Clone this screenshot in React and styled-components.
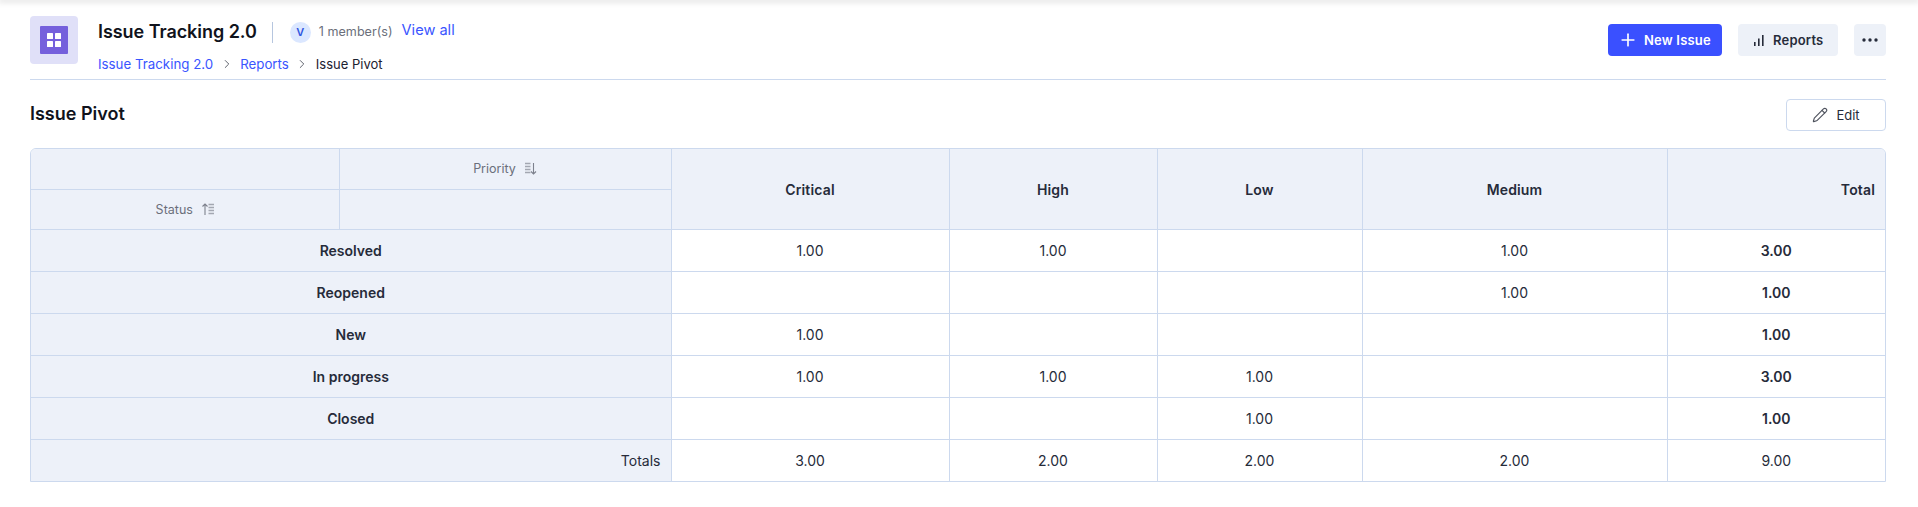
import React from 'react'
import styled, { createGlobalStyle } from 'styled-components'
import { Plus, Pencil, ChevronRight } from 'lucide-react'

const GlobalStyle = createGlobalStyle`
  html, body { margin: 0; padding: 0; background: #fff; }
  body { font-family: Inter, "Noto Sans", sans-serif; color: #1c2130; overflow: hidden; }
`

const Shadow = styled.div`
  height: 0;
  box-shadow: 0 0 6px 2px rgba(0, 0, 0, 0.14);
`

const Page = styled.div`
  width: 1918px;
  height: 507px;
  padding: 0 32px 0 30px;
  box-sizing: border-box;
  overflow: hidden;
`

const Header = styled.header`
  display: flex;
  justify-content: space-between;
  padding-top: 16px;
  box-sizing: border-box;
  border-bottom: 1px solid #ccd9ee;
  height: 80px;
`

const HeaderLeft = styled.div`
  display: flex;
  gap: 20px;
`

const AppIcon = styled.div`
  width: 48px;
  height: 48px;
  border-radius: 4px;
  background: #e0e0f8;
  display: flex;
  align-items: center;
  justify-content: center;
`

const AppIconInner = styled.div`
  width: 28px;
  height: 28px;
  border-radius: 1px;
  background: #7560dc;
  display: flex;
  align-items: center;
  justify-content: center;
`

const TitleBlock = styled.div`
  display: flex;
  flex-direction: column;
`

const TitleRow = styled.div`
  display: flex;
  align-items: center;
  height: 32px;
`

const AppTitle = styled.div`
  font-size: 18px;
  font-weight: 600;
  color: #10131c;
  line-height: 32px;
  letter-spacing: -0.05px;
`

const Divider = styled.div`
  width: 1px;
  height: 21px;
  background: #b6c6df;
  margin: 0 17px 0 15px;
`

const Avatar = styled.div`
  width: 21px;
  height: 21px;
  border-radius: 50%;
  background: #dbe7ff;
  color: #2f55e0;
  font-size: 11px;
  font-weight: 600;
  display: flex;
  align-items: center;
  justify-content: center;
`

const Members = styled.span`
  font-size: 12.6px;
  color: #6b6f7b;
  margin: 0 9px 2px 8px;
`

const Link = styled.a`
  color: #3a55ff;
  font-size: 13.3px;
  text-decoration: none;
`

const ViewAll = styled(Link)`
  font-size: 14.6px;
  margin-bottom: 5px;
`

const Crumbs = styled.nav`
  display: flex;
  align-items: center;
  height: 20px;
  margin-top: 6px;
  font-size: 13px;
  color: #1c2130;
  gap: 6.5px;
  svg { color: #555964; }
`

const HeaderActions = styled.div`
  display: flex;
  gap: 16px;
  padding-top: 8px;
`

const ActionButton = styled.button`
  width: ${p => p.$width}px;
  height: 32px;
  padding: 0 0 0 ${p => p.$padLeft}px;
  border: 0;
  border-radius: 4px;
  background: ${p => (p.$primary ? '#3a50ff' : '#edf1f8')};
  color: ${p => (p.$primary ? '#fff' : '#262b3a')};
  font-family: inherit;
  font-size: 13px;
  font-weight: 600;
  letter-spacing: 0.2px;
  display: flex;
  align-items: center;
  gap: ${p => p.$gap}px;
`

const SubHeader = styled.div`
  display: flex;
  justify-content: space-between;
  align-items: center;
  height: 68px;
`

const PageTitle = styled.h2`
  margin: 0 0 2px;
  font-size: 18px;
  font-weight: 600;
  color: #10131c;
`

const EditButton = styled.button`
  width: 100px;
  height: 32px;
  border: 1px solid #ccd9ee;
  border-radius: 4px;
  background: #fff;
  color: #262b3a;
  font-family: inherit;
  font-size: 13px;
  display: flex;
  align-items: center;
  justify-content: center;
  gap: 8px;
  margin-top: 2px;
  svg { color: #4f535e; }
`

const TableWrap = styled.div`
  border: 1px solid #ccd9ee;
  border-radius: 6px 6px 0 0;
  overflow: hidden;
  width: 1856px;
  box-sizing: border-box;
`

const Table = styled.table`
  width: 100%;
  table-layout: fixed;
  border-collapse: collapse;
  font-size: 14px;

  th, td { border: 1px solid #ccd9ee; padding: 0; box-sizing: border-box; }
  thead tr:first-child > * { border-top: 0; }
  tbody tr:last-child > * { border-bottom: 0; }
  tr > *:first-child { border-left: 0; }
  tr > *:last-child { border-right: 0; }
`

const Row = styled.tr`
  height: ${p => p.$h || 42}px;
`

const HeadCell = styled.th`
  background: #edf1f9;
  font-weight: 600;
  color: #262b3a;
  letter-spacing: 0.15px;
  padding-top: 2px !important;
  text-align: ${p => p.$align || 'center'};
  ${p => p.$align === 'right' && 'padding-right: 10px !important;'}
`

const AxisCell = styled.th`
  background: #edf1f9;
  font-weight: 400;
  font-size: 12.5px;
  color: #6b6f7b;
  text-align: center;
`

const AxisLabel = styled.span`
  display: inline-flex;
  align-items: center;
  gap: 9px;
`

const RowHead = styled.th`
  background: #edf1f9;
  font-weight: 600;
  color: #262b3a;
  text-align: center;
`

const TotalsHead = styled.th`
  background: #edf1f9;
  font-weight: 400;
  color: #262b3a;
  text-align: right;
  padding-right: 10px !important;
`

const Cell = styled.td`
  text-align: center;
  color: #262b3a;
  font-weight: ${p => (p.$bold ? 600 : 400)};
`

const GridIcon = () => (
  <svg width="16" height="16" viewBox="0 0 16 16" fill="#fff">
    <rect x="1" y="1" width="6" height="6" rx="0.6" />
    <rect x="9" y="1" width="6" height="6" rx="0.6" />
    <rect x="1" y="9" width="6" height="6" rx="0.6" />
    <rect x="9" y="9" width="6" height="6" rx="0.6" />
  </svg>
)

const BarsIcon = () => (
  <svg width="12" height="12" viewBox="0 0 12 12" fill="#262b3a">
    <rect x="1" y="8" width="1.6" height="4" />
    <rect x="5" y="4.5" width="1.6" height="7.5" />
    <rect x="9" y="1" width="1.6" height="11" />
  </svg>
)

const DotsIcon = () => (
  <svg width="16" height="4" viewBox="0 0 16 4" fill="#262b3a">
    <circle cx="2" cy="2" r="1.7" />
    <circle cx="8" cy="2" r="1.7" />
    <circle cx="14" cy="2" r="1.7" />
  </svg>
)

const SortDesc = () => (
  <svg width="12" height="13" viewBox="0 0 12 13" fill="none" stroke="#7d818d" strokeWidth="1.1">
    <path d="M0 1.5H5.5M0 4.5H5.5M0 7.5H5.5M0 10.5H5.5" stroke="#a3a7b1" strokeWidth="1.3" />
    <path d="M8.5 1V12M6 9.5L8.5 12L11 9.5" />
  </svg>
)

const SortAsc = () => (
  <svg width="12" height="13" viewBox="0 0 12 13" fill="none" stroke="#7d818d" strokeWidth="1.1">
    <path d="M3 12V1M0.5 3.5L3 1L5.5 3.5" />
    <path d="M6.5 1.5H12M6.5 4.5H12M6.5 7.5H12M6.5 10.5H12" stroke="#a3a7b1" strokeWidth="1.3" />
  </svg>
)

const rows = [
  ['Resolved', '1.00', '1.00', '', '1.00', '3.00'],
  ['Reopened', '', '', '', '1.00', '1.00'],
  ['New', '1.00', '', '', '', '1.00'],
  ['In progress', '1.00', '1.00', '1.00', '', '3.00'],
  ['Closed', '', '', '1.00', '', '1.00'],
]

const totals = ['3.00', '2.00', '2.00', '2.00', '9.00']

const App = () => (
  <>
    <GlobalStyle />
    <Shadow />
    <Page>
      <Header>
        <HeaderLeft>
          <AppIcon>
            <AppIconInner>
              <GridIcon />
            </AppIconInner>
          </AppIcon>
          <TitleBlock>
            <TitleRow>
              <AppTitle>Issue Tracking 2.0</AppTitle>
              <Divider />
              <Avatar>V</Avatar>
              <Members>1 member(s)</Members>
              <ViewAll>View all</ViewAll>
            </TitleRow>
            <Crumbs>
              <Link>Issue Tracking 2.0</Link>
              <ChevronRight size={14} strokeWidth={1.6} />
              <Link>Reports</Link>
              <ChevronRight size={14} strokeWidth={1.6} />
              <span>Issue Pivot</span>
            </Crumbs>
          </TitleBlock>
        </HeaderLeft>
        <HeaderActions>
          <ActionButton $primary $width={114} $padLeft={10} $gap={6}>
            <Plus size={20} />
            New Issue
          </ActionButton>
          <ActionButton $width={100} $padLeft={15} $gap={8}>
            <BarsIcon />
            Reports
          </ActionButton>
          <ActionButton $width={32} $padLeft={8} $gap={0}>
            <DotsIcon />
          </ActionButton>
        </HeaderActions>
      </Header>
      <SubHeader>
        <PageTitle>Issue Pivot</PageTitle>
        <EditButton>
          <Pencil size={16} strokeWidth={1.7} />
          Edit
        </EditButton>
      </SubHeader>
      <TableWrap>
        <Table>
          <colgroup>
            <col style={{ width: 308 }} />
            <col style={{ width: 332 }} />
            <col style={{ width: 278 }} />
            <col style={{ width: 208 }} />
            <col style={{ width: 205 }} />
            <col style={{ width: 305 }} />
            <col />
          </colgroup>
          <thead>
            <Row $h={40}>
              <AxisCell />
              <AxisCell>
                <AxisLabel>Priority <SortDesc /></AxisLabel>
              </AxisCell>
              <HeadCell rowSpan={2}>Critical</HeadCell>
              <HeadCell rowSpan={2}>High</HeadCell>
              <HeadCell rowSpan={2}>Low</HeadCell>
              <HeadCell rowSpan={2}>Medium</HeadCell>
              <HeadCell rowSpan={2} $align="right">Total</HeadCell>
            </Row>
            <Row $h={40}>
              <AxisCell>
                <AxisLabel>Status <SortAsc /></AxisLabel>
              </AxisCell>
              <AxisCell />
            </Row>
          </thead>
          <tbody>
            {rows.map(r => (
              <Row key={r[0]}>
                <RowHead colSpan={2}>{r[0]}</RowHead>
                {r.slice(1).map((v, i) => (
                  <Cell key={i} $bold={i === 4}>{v}</Cell>
                ))}
              </Row>
            ))}
            <Row $h={42}>
              <TotalsHead colSpan={2}>Totals</TotalsHead>
              {totals.map((v, i) => (
                <Cell key={i}>{v}</Cell>
              ))}
            </Row>
          </tbody>
        </Table>
      </TableWrap>
    </Page>
  </>
)

export default App
